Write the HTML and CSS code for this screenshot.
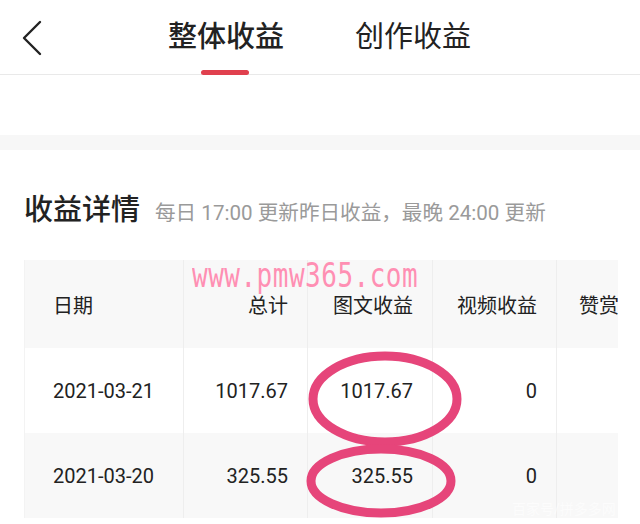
FILE: index.html
```html
<!DOCTYPE html>
<html lang="zh-CN">

<head>
  <meta charset="UTF-8">
  <meta name="viewport" content="width=device-width, initial-scale=1.0">
  <link rel="stylesheet" href="styles.css">
  <title>收益详情</title>
</head>

<body>
  <div class="top-bar">
    <button class="back" aria-label="返回">
      <svg width="22" height="36" viewBox="0 0 22 36">
        <path d="M19 2 L3 18 L19 34" fill="none" stroke="#222" stroke-width="2.4" stroke-linecap="round" stroke-linejoin="round" />
      </svg>
    </button>
    <div class="tabs">
      <div class="tab is-active">整体收益</div>
      <div class="tab">创作收益</div>
    </div>
  </div>
  <div class="blank"></div>
  <div class="band"></div>

  <div class="section">
    <div class="section-head">
      <span class="section-title">收益详情</span>
      <span class="section-note">每日 17:00 更新昨日收益，最晚 24:00 更新</span>
    </div>

    <div class="table-wrap">
      <div class="table-clip">
        <table class="income">
          <colgroup>
            <col class="w-date">
            <col class="w-124">
            <col class="w-125">
            <col class="w-124">
            <col class="w-last">
          </colgroup>
          <thead>
            <tr>
              <th class="c-date">日期</th>
              <th>总计</th>
              <th>图文收益</th>
              <th>视频收益</th>
              <th class="c-last">赞赏</th>
            </tr>
          </thead>
          <tbody>
            <tr>
              <td class="c-date">2021-03-21</td>
              <td>1017.67</td>
              <td>1017.67</td>
              <td>0</td>
              <td class="c-last"></td>
            </tr>
            <tr class="odd">
              <td class="c-date">2021-03-20</td>
              <td>325.55</td>
              <td>325.55</td>
              <td>0</td>
              <td class="c-last"></td>
            </tr>
          </tbody>
        </table>
      </div>

      <!-- 水印和标注 -->
      <div class="watermark">www.pmw365.com</div>
      <svg class="mark" width="640" height="264" viewBox="0 0 640 264">
        <ellipse cx="385" cy="139" rx="72" ry="43" fill="none" stroke="#e6457a" stroke-width="9" />
        <ellipse cx="381" cy="221" rx="70" ry="32" fill="none" stroke="#e6457a" stroke-width="9" />
      </svg>
      <div class="corner-mark">百家号/拼多多网</div>
    </div>
  </div>
</body>
</html>
```

FILE: styles.css
```css
html,
body {
  margin: 0;
  height: 100%;
  overflow: hidden;
  background: #fff;
  font-family: Roboto, "Noto Sans CJK SC", sans-serif;
  color: #222;
}

.top-bar {
  display: flex;
  align-items: center;
  height: 74px;
  border-bottom: 1px solid #e9e9e9;
}

.back {
  display: flex;
  align-items: center;
  justify-content: center;
  width: 36px;
  height: 40px;
  margin: 2px 0 0 14px;
  padding: 0;
  border: none;
  background: none;
}

.tabs {
  display: flex;
  gap: 71px;
  margin-left: 118px;
  height: 100%;
}

.tab {
  position: relative;
  display: flex;
  align-items: center;
  padding-bottom: 6px;
  font-size: 29px;
  color: #222;
}

.tab.is-active {
  font-weight: 500;
}

.tab.is-active::after {
  content: "";
  position: absolute;
  left: 33px;
  bottom: -1px;
  width: 48px;
  height: 5px;
  border-radius: 3px;
  background: #e0404e;
}

.blank {
  height: 60px;
}

.band {
  height: 15px;
  background: #f7f7f7;
}

.section {
  padding: 36px 0 0 24px;
}

.section-head {
  display: flex;
  align-items: baseline;
  gap: 15px;
  height: 74px;
}

.section-title {
  font-size: 29px;
  font-weight: 500;
  color: #222;
}

.section-note {
  font-size: 20.6px;
  color: #9a9a9a;
}

.table-wrap {
  position: relative;
  width: 593px;
}

.table-clip {
  width: 594px;
  height: 264px;
  overflow: hidden;
}

.income {
  border-collapse: collapse;
  table-layout: fixed;
  width: 666px;
  font-size: 20px;
  color: #222;
}

.w-date {
  width: 159px;
}

.w-124 {
  width: 124px;
}

.w-125 {
  width: 125px;
}

.w-last {
  width: 134px;
}

.income th,
.income td {
  padding: 0 19px 0 0;
  text-align: right;
  border-left: 1px solid #eeeeee;
  font-weight: 400;
  white-space: nowrap;
}

.income th {
  height: 88px;
  background: #f8f8f8;
}

.income td {
  height: 85px;
}

.income tr.odd td {
  background: #f8f8f8;
}

.income .c-date {
  padding: 0 0 0 28px;
  text-align: left;
  border-left: 1px solid #f3f3f3;
}

.income .c-last {
  padding: 0 0 0 22px;
  text-align: left;
}

.watermark {
  position: absolute;
  left: 168px;
  top: -4px;
  font-family: "DejaVu Sans Mono", monospace;
  font-size: 26px;
  color: #ff8fb3;
  letter-spacing: 0.5px;
  transform: scaleY(1.3);
  transform-origin: left top;
}

.mark {
  position: absolute;
  left: -24px;
  top: 0;
}

.corner-mark {
  position: absolute;
  left: 488px;
  top: 238px;
  font-size: 14px;
  color: rgba(255, 255, 255, 0.6);
}
```
